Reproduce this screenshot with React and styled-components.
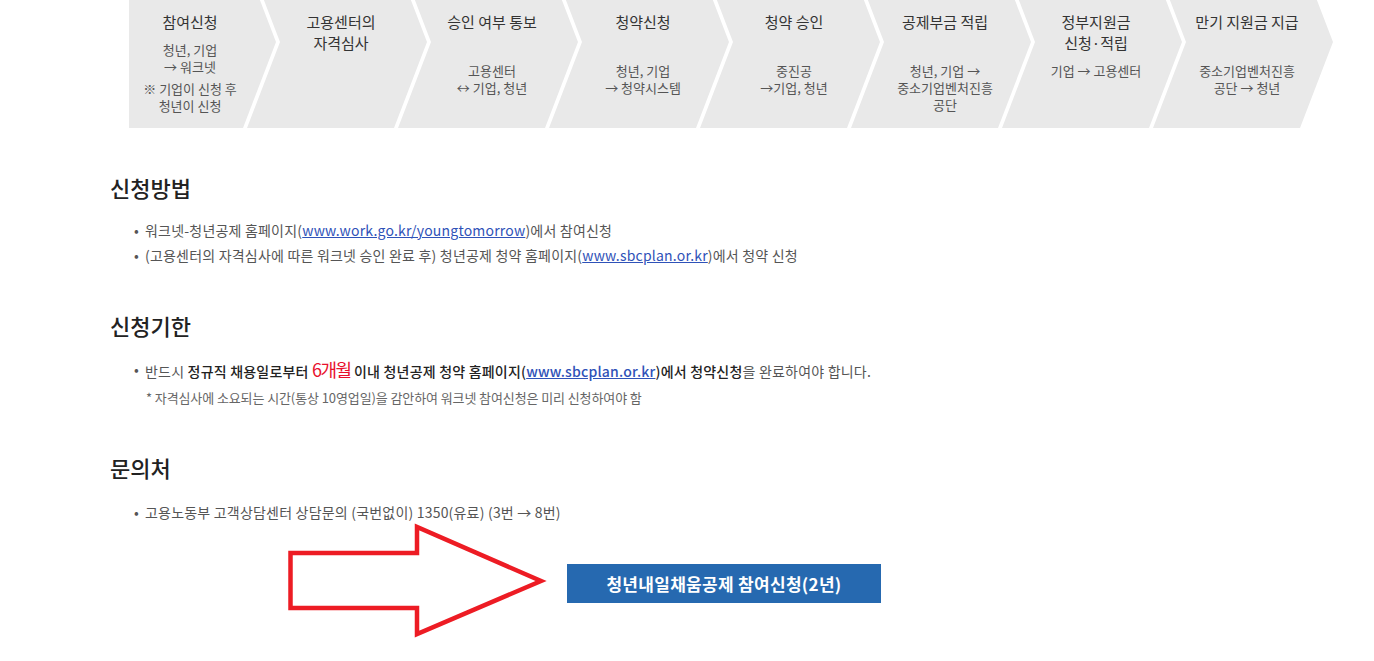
import React from "react";
import styled, { createGlobalStyle } from "styled-components";

const GlobalStyle = createGlobalStyle`
  html, body {
    margin: 0;
    padding: 0;
    background: #fff;
    overflow: hidden;
  }
  body {
    font-family: "Noto Sans CJK KR", "Noto Sans", sans-serif;
    color: #555;
  }
`;

const StyledPage = styled.div`
  width: 1374px;
`;

const Flow = styled.ol`
  display: flex;
  height: 172px;
  margin: -44px 0 0 96px;
  padding: 0;
  list-style: none;
`;

const Step = styled.li`
  flex: 0 0 180px;
  margin-left: ${p => (p.$first ? 0 : -29)}px;
  padding: 55px 25px 0 33px;
  box-sizing: border-box;
  background: #e9e9e9;
  text-align: center;
  clip-path: ${p =>
    p.$first
      ? "polygon(33px 0, 147px 0, 180px 50%, 147px 100%, 33px 100%)"
      : "polygon(0 0, 147px 0, 180px 50%, 147px 100%, 0 100%, 33px 50%)"};

  .step-title {
    min-height: ${p => (p.$compact ? 0 : 42)}px;
    font-size: 15px;
    line-height: 21px;
    color: #333;
  }

  .step-desc {
    margin-top: 9px;
    font-size: 13px;
    line-height: 17px;
    color: #555;
  }

  .step-desc + .step-desc {
    margin-top: 5px;
  }
`;

const Main = styled.main`
  padding: 0 0 0 110px;
`;

const Section = styled.section`
  margin-top: ${p => p.$gap || 44}px;
`;

const Heading = styled.h2`
  margin: 0;
  font-size: 22px;
  line-height: 30px;
  font-weight: 500;
  color: #222;
`;

const Bullets = styled.ul`
  margin: ${p => p.$top || 16}px 0 0;
  padding: 0;
  list-style: none;
  font-size: 14px;
  line-height: 25px;
  letter-spacing: 0.2px;
  color: #555;

  li {
    position: relative;
    padding-left: 35px;
  }

  li::before {
    content: "•";
    position: absolute;
    left: 24px;
    top: 0;
    color: #555;
  }

  a {
    color: #2f52b8;
    text-decoration: underline;
  }

  strong {
    font-weight: 500;
    color: #222;
  }

  .accent {
    font-size: 18px;
    letter-spacing: -1.5px;
    color: #e8112d;
  }
`;

const Note = styled.p`
  margin: 4px 0 0 36px;
  font-size: 13px;
  line-height: 20px;
  letter-spacing: -0.1px;
  color: #666;
`;

const Action = styled.div`
  display: flex;
  align-items: center;
  gap: 15px;
  margin: -3px 0 0 176px;
`;

const ApplyButton = styled.a`
  display: flex;
  align-items: center;
  justify-content: center;
  width: 314px;
  height: 39px;
  margin-top: 6px;
  background: #2669b0;
  color: #fff;
  font-size: 17px;
  font-weight: 700;
  letter-spacing: 0.3px;
  text-decoration: none;
`;

const steps = [
  { title: ["참여신청"], desc: [["청년, 기업", "→ 워크넷"], ["※ 기업이 신청 후", "청년이 신청"]], compact: true },
  { title: ["고용센터의", "자격심사"], desc: [] },
  { title: ["승인 여부 통보"], desc: [["고용센터", "↔ 기업, 청년"]] },
  { title: ["청약신청"], desc: [["청년, 기업", "→ 청약시스템"]] },
  { title: ["청약 승인"], desc: [["중진공", "→기업, 청년"]] },
  { title: ["공제부금 적립"], desc: [["청년, 기업 →", "중소기업벤처진흥", "공단"]] },
  { title: ["정부지원금", "신청·적립"], desc: [["기업 → 고용센터"]] },
  { title: ["만기 지원금 지급"], desc: [["중소기업벤처진흥", "공단 → 청년"]] }
];

const lines = arr => arr.map((t, i) => <div key={i}>{t}</div>);

const Arrow = () => (
  <svg width="266" height="117" viewBox="0 0 266 117">
    <polygon
      points="4.5,31 131,31 131,5 255,59 131,112 131,86 4.5,86"
      fill="none"
      stroke="#ed1c24"
      strokeWidth="4.5"
      strokeLinejoin="miter"
    />
  </svg>
);

const App = () => (
  <StyledPage>
    <GlobalStyle />

    <Flow>
      {steps.map((s, i) => (
        <Step key={i} $first={i === 0} $compact={s.compact}>
          <div className="step-title">{lines(s.title)}</div>
          {s.desc.map((d, j) => (
            <div className="step-desc" key={j}>
              {lines(d)}
            </div>
          ))}
        </Step>
      ))}
    </Flow>

    <Main>
      <Section $gap={44}>
        <Heading>신청방법</Heading>
        <Bullets>
          <li>
            워크넷-청년공제 홈페이지(<a href="#">www.work.go.kr/youngtomorrow</a>)에서 참여신청
          </li>
          <li>
            (고용센터의 자격심사에 따른 워크넷 승인 완료 후) 청년공제 청약 홈페이지(
            <a href="#">www.sbcplan.or.kr</a>)에서 청약 신청
          </li>
        </Bullets>
      </Section>

      <Section $gap={42}>
        <Heading>신청기한</Heading>
        <Bullets $top={17}>
          <li>
            반드시 <strong>정규직 채용일로부터</strong> <span className="accent">6개월</span>{" "}
            <strong>
              이내 청년공제 청약 홈페이지(<a href="#">www.sbcplan.or.kr</a>)에서 청약신청
            </strong>
            을 완료하여야 합니다.
          </li>
        </Bullets>
        <Note>* 자격심사에 소요되는 시간(통상 10영업일)을 감안하여 워크넷 참여신청은 미리 신청하여야 함</Note>
      </Section>

      <Section $gap={44}>
        <Heading>문의처</Heading>
        <Bullets $top={18}>
          <li>고용노동부 고객상담센터 상담문의 (국번없이) 1350(유료) (3번 → 8번)</li>
        </Bullets>
      </Section>

      <Action>
        <Arrow />
        <ApplyButton href="#">청년내일채움공제 참여신청(2년)</ApplyButton>
      </Action>
    </Main>
  </StyledPage>
);

export default App;
